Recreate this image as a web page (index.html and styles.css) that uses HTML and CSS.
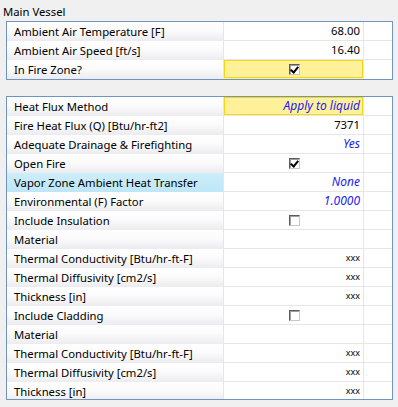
FILE: index.html
```html
<!DOCTYPE html>
<html lang="en">
<head>
<meta charset="UTF-8">
<title>Main Vessel</title>
<link rel="stylesheet" href="styles.css">
</head>
<body>

<div class="title">Main Vessel</div>

<div class="grid">
  <div class="row">
    <div class="label">Ambient Air Temperature [F]</div>
    <div class="value">68.00</div>
    <div class="extra"></div>
  </div>
  <div class="row">
    <div class="label">Ambient Air Speed [ft/s]</div>
    <div class="value">16.40</div>
    <div class="extra"></div>
  </div>
  <div class="row">
    <div class="label">In Fire Zone?</div>
    <div class="value selected center"><span class="check checked"></span></div>
    <div class="extra"></div>
  </div>
</div>

<div class="grid grid-fire">
  <div class="row">
    <div class="label">Heat Flux Method</div>
    <div class="value selected choice">Apply to liquid</div>
    <div class="extra"></div>
  </div>
  <div class="row">
    <div class="label">Fire Heat Flux (Q) [Btu/hr-ft2]</div>
    <div class="value">7371</div>
    <div class="extra"></div>
  </div>
  <div class="row">
    <div class="label">Adequate Drainage &amp; Firefighting</div>
    <div class="value choice">Yes</div>
    <div class="extra"></div>
  </div>
  <div class="row">
    <div class="label">Open Fire</div>
    <div class="value center"><span class="check checked"></span></div>
    <div class="extra"></div>
  </div>
  <div class="row">
    <div class="label active">Vapor Zone Ambient Heat Transfer</div>
    <div class="value choice">None</div>
    <div class="extra"></div>
  </div>
  <div class="row">
    <div class="label">Environmental (F) Factor</div>
    <div class="value choice">1.0000</div>
    <div class="extra"></div>
  </div>
  <div class="row">
    <div class="label">Include Insulation</div>
    <div class="value center"><span class="check"></span></div>
    <div class="extra"></div>
  </div>
  <div class="row">
    <div class="label">Material</div>
    <div class="value"></div>
    <div class="extra"></div>
  </div>
  <div class="row">
    <div class="label">Thermal Conductivity [Btu/hr-ft-F]</div>
    <div class="value small">xxx</div>
    <div class="extra"></div>
  </div>
  <div class="row">
    <div class="label">Thermal Diffusivity [cm2/s]</div>
    <div class="value small">xxx</div>
    <div class="extra"></div>
  </div>
  <div class="row">
    <div class="label">Thickness [in]</div>
    <div class="value small">xxx</div>
    <div class="extra"></div>
  </div>
  <div class="row">
    <div class="label">Include Cladding</div>
    <div class="value center"><span class="check"></span></div>
    <div class="extra"></div>
  </div>
  <div class="row">
    <div class="label">Material</div>
    <div class="value"></div>
    <div class="extra"></div>
  </div>
  <div class="row">
    <div class="label">Thermal Conductivity [Btu/hr-ft-F]</div>
    <div class="value small">xxx</div>
    <div class="extra"></div>
  </div>
  <div class="row">
    <div class="label">Thermal Diffusivity [cm2/s]</div>
    <div class="value small">xxx</div>
    <div class="extra"></div>
  </div>
  <div class="row">
    <div class="label">Thickness [in]</div>
    <div class="value small">xxx</div>
    <div class="extra"></div>
  </div>
</div>

</body>
</html>
```

FILE: styles.css
```css
body {
  margin: 0;
  background-color: #f0f0f0;
  font-family: 'Noto Sans', 'Open Sans', sans-serif;
  font-size: 11.3px;
  color: #000;
}

.title {
  height: 21px;
  padding-left: 3px;
  line-height: 23px;
  box-sizing: border-box;
}

.grid {
  width: 387px;
  margin-left: 6px;
  border: 1px solid #7093c0;
  background: #fff;
  box-sizing: border-box;
}

.grid-fire {
  margin-top: 16px;
  height: 304px;
  overflow: hidden;
}

.row {
  display: flex;
  height: 19px;
}

.grid > .row:last-child .value,
.grid > .row:last-child .extra {
  border-bottom-color: transparent;
}

.label {
  width: 216px;
  padding-left: 7px;
  line-height: 19px;
  white-space: nowrap;
  background: linear-gradient(#ffffff, #fbfbfc 45%, #ececf0);
  box-sizing: border-box;
}

.label.active {
  background: linear-gradient(#cdeefb, #bde6f6);
}

.value {
  width: 141px;
  border-left: 1px solid #e6e6e6;
  border-right: 1px solid #e6e6e6;
  border-bottom: 1px solid #e6e6e6;
  padding-right: 3px;
  text-align: right;
  line-height: 18px;
  white-space: nowrap;
  box-sizing: border-box;
}

.value.selected {
  background: #fff09a;
  box-shadow: inset 0 0 0 1px #f7d716;
}

.value.center {
  display: flex;
  justify-content: center;
  align-items: center;
  padding-right: 0;
}

.choice {
  color: #1c1cf0;
  font-style: italic;
  font-size: 12px;
}

.small {
  font-size: 9px;
}

.extra {
  flex: 1;
  border-bottom: 1px solid #e6e6e6;
}

.check {
  width: 11px;
  height: 11px;
  margin-left: 1px;
  box-sizing: border-box;
  border: 1px solid;
  border-color: #5c5c5c #c8c8c8 #c8c8c8 #5c5c5c;
  background: #fff;
  box-shadow: inset 1px 1px 0 #a0a0a0;
  position: relative;
}

.check.checked::after {
  content: '';
  position: absolute;
  left: 2px;
  top: 0px;
  width: 3px;
  height: 6px;
  border: solid #000;
  border-width: 0 2px 2px 0;
  transform: rotate(40deg);
}
```
